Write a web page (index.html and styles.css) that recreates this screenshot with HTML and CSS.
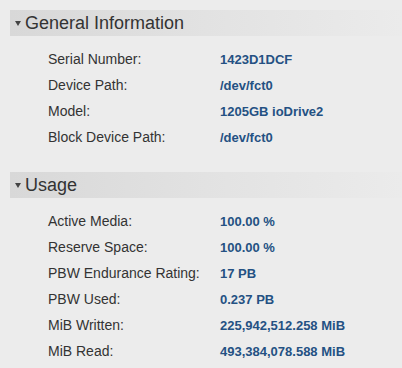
FILE: index.html
```html
<!DOCTYPE html>
<html lang="en">
<head>
    <meta charset="UTF-8">
    <title>Device Info</title>
    <link rel="stylesheet" href="styles.css">
</head>
<body>
    <div class="section">
        <div class="section-header"><span class="arrow"></span>General Information</div>
        <div class="rows">
            <div class="row"><span class="label">Serial Number:</span><span class="value">1423D1DCF</span></div>
            <div class="row"><span class="label">Device Path:</span><span class="value">/dev/fct0</span></div>
            <div class="row"><span class="label">Model:</span><span class="value">1205GB ioDrive2</span></div>
            <div class="row"><span class="label">Block Device Path:</span><span class="value">/dev/fct0</span></div>
        </div>
    </div>
    <div class="section">
        <div class="section-header"><span class="arrow"></span>Usage</div>
        <div class="rows">
            <div class="row"><span class="label">Active Media:</span><span class="value">100.00 %</span></div>
            <div class="row"><span class="label">Reserve Space:</span><span class="value">100.00 %</span></div>
            <div class="row"><span class="label">PBW Endurance Rating:</span><span class="value">17 PB</span></div>
            <div class="row"><span class="label">PBW Used:</span><span class="value">0.237 PB</span></div>
            <div class="row"><span class="label">MiB Written:</span><span class="value">225,942,512.258 MiB</span></div>
            <div class="row"><span class="label">MiB Read:</span><span class="value">493,384,078.588 MiB</span></div>
        </div>
    </div>
</body>
</html>
```
FILE: styles.css
```css
body {
    margin: 0;
    padding: 10px 0 0 10px;
    background-color: #ececec;
    font-family: 'Liberation Sans', Arial, sans-serif;
    color: #333;
}
.section {
    margin-bottom: 22px;
}
.section-header {
    height: 26px;
    display: flex;
    align-items: center;
    font-size: 18px;
    color: #333;
    background: linear-gradient(to right, #d8d8d8, #e2e2e2 50%, #ebebeb);
}
.arrow {
    width: 0;
    height: 0;
    margin: 1px 4px 0 5px;
    border-left: 3.5px solid transparent;
    border-right: 3.5px solid transparent;
    border-top: 5px solid #444;
}
.rows {
    padding: 10px 0 0 38px;
}
.row {
    height: 26px;
    display: flex;
    align-items: center;
}
.label {
    width: 172px;
    font-size: 14px;
    color: #333;
}
.value {
    font-size: 13px;
    font-weight: bold;
    color: #245183;
}
```
